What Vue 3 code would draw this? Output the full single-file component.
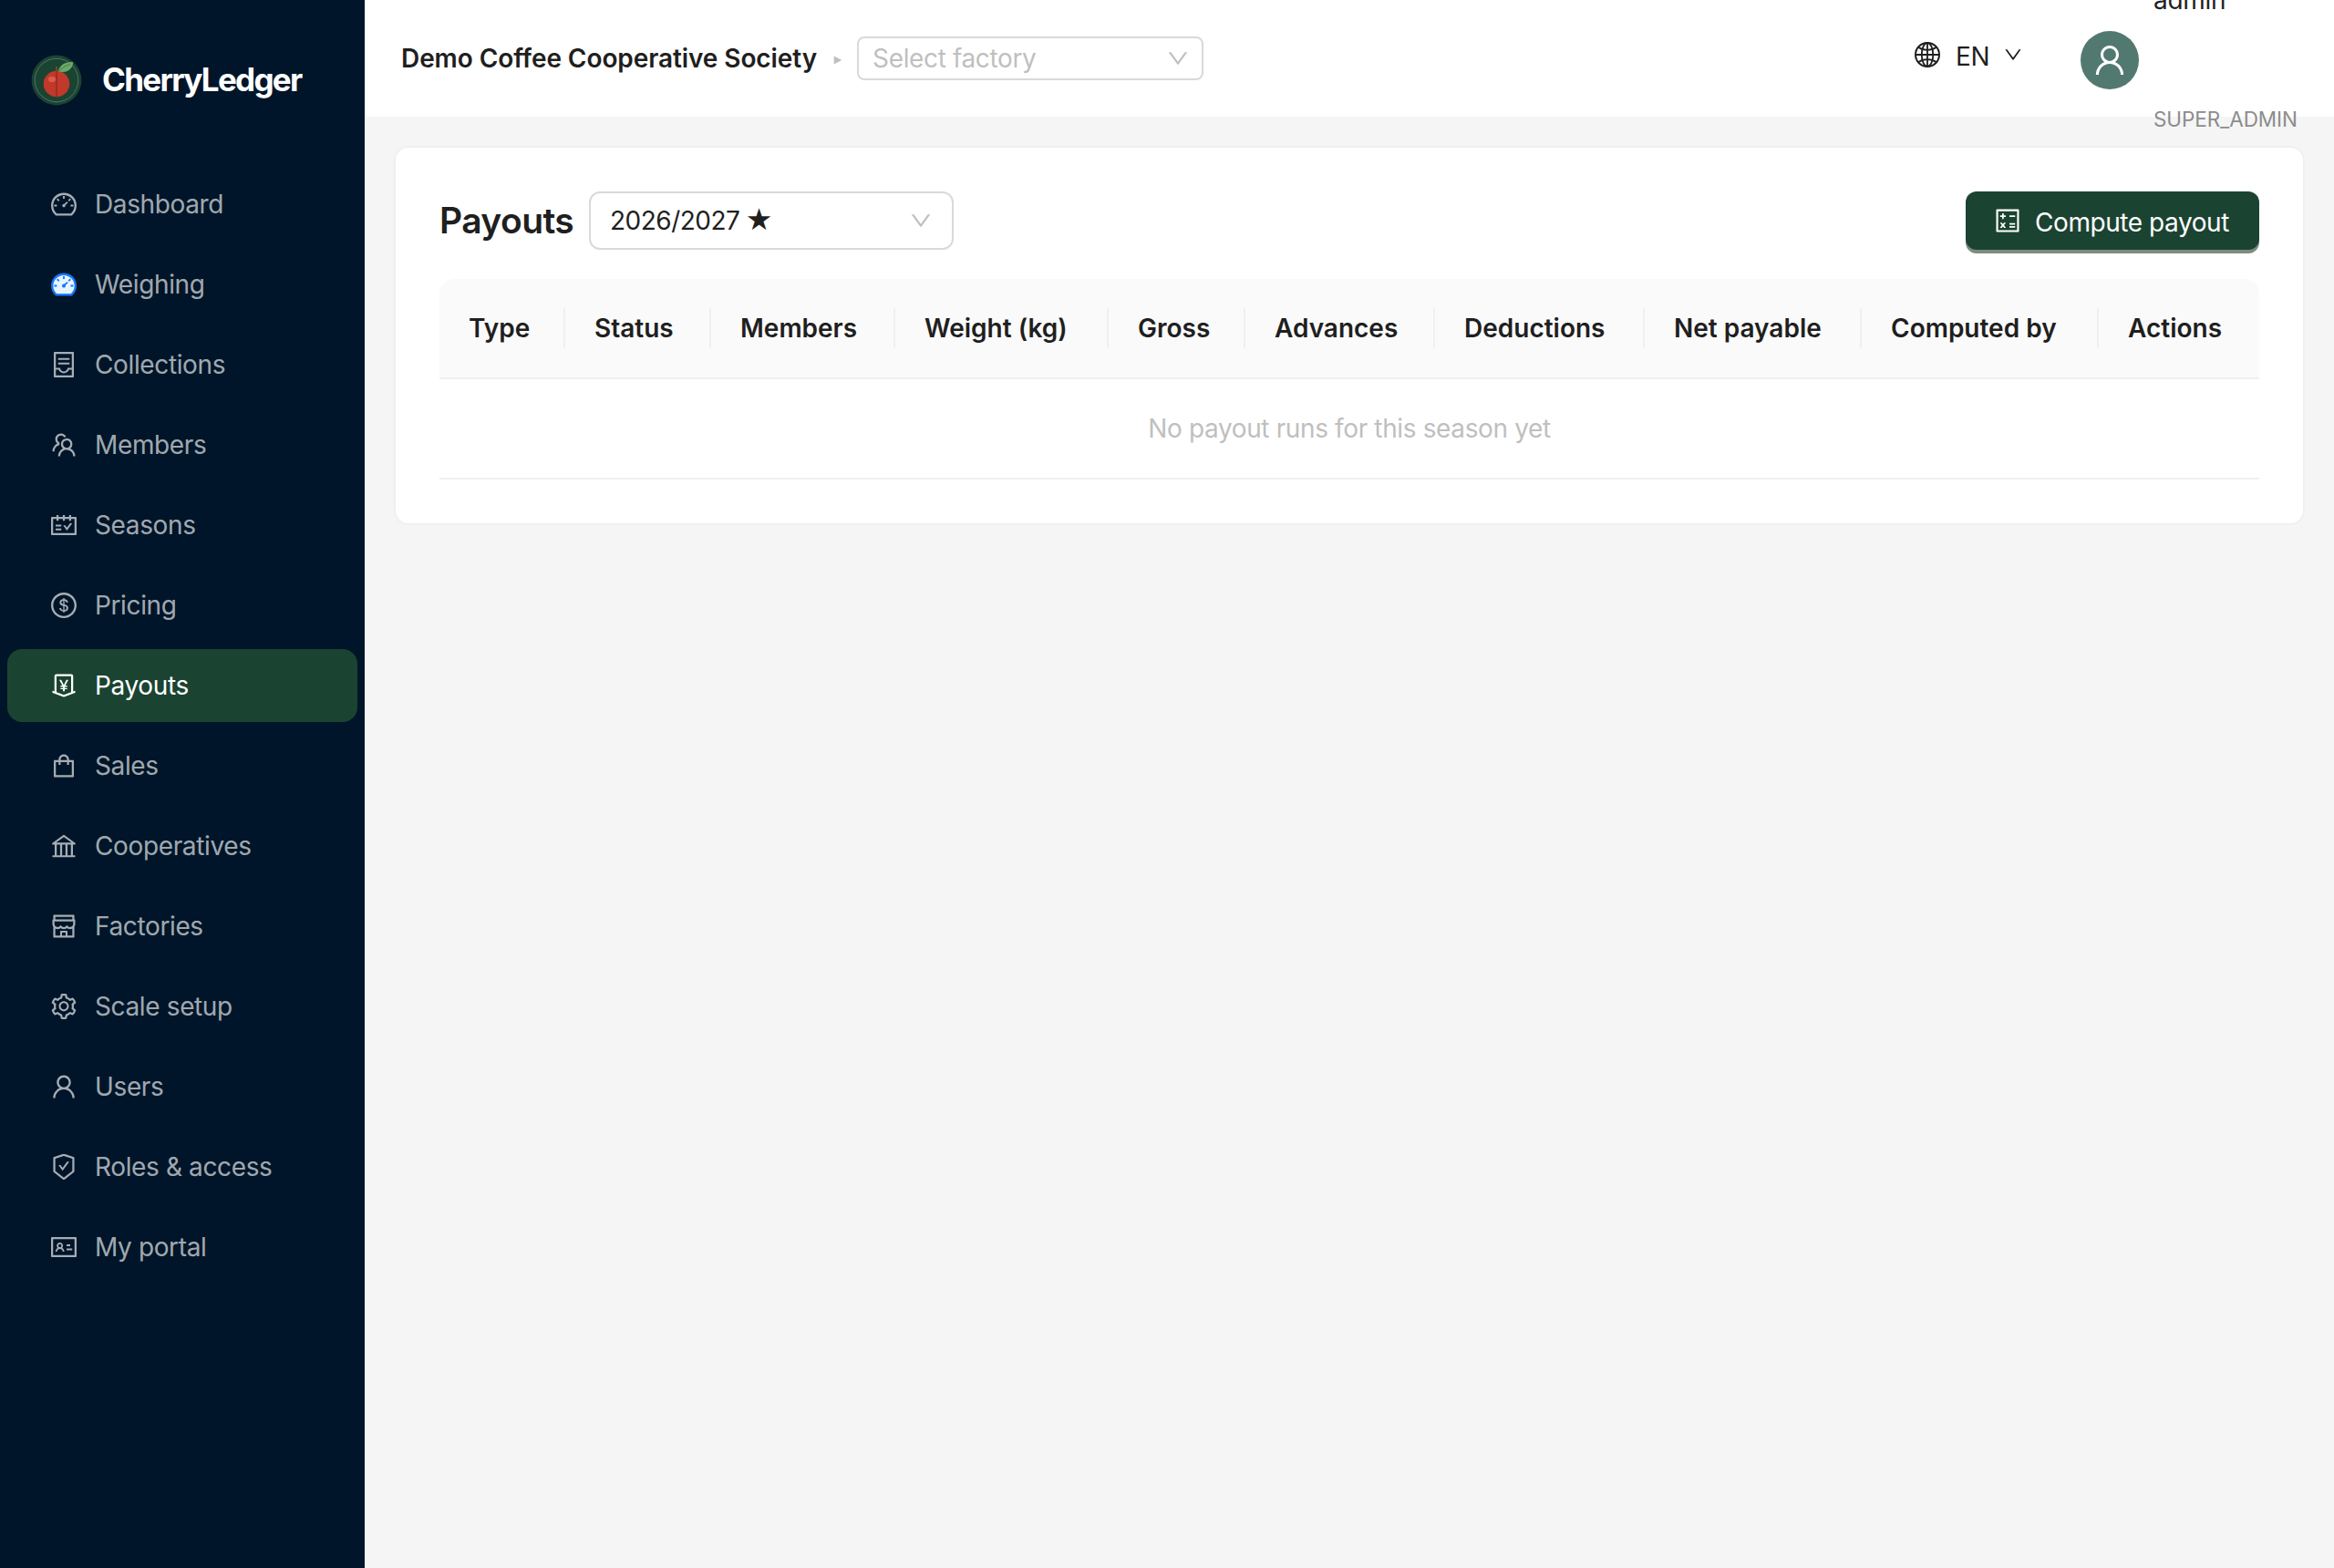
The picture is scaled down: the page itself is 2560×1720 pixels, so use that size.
<template>
  <div class="layout">
    <aside class="sider">
      <div class="brand">
        <svg class="logo" viewBox="0 0 56 56">
          <circle cx="28" cy="28" r="27.4" fill="#1b4332" />
          <circle cx="28" cy="28" r="23.8" fill="none" stroke="#52796f" stroke-width="0.9" />
          <circle cx="28" cy="32" r="14.3" fill="#c0392b" />
          <path d="M28 17.5v28.8" stroke="#962d22" stroke-width="1.6" />
          <path d="M28 13v5" stroke="#7b4a2d" stroke-width="1.8" />
          <ellipse cx="23" cy="27" rx="4.1" ry="3.1" fill="#e05a47" />
          <path d="M29.6 18.2C32 10.8 38.5 7.2 46.2 8.2 45.8 15.5 39.5 21 29.6 18.2z" fill="#6ba868" />
          <path d="M30 18q6-5.5 13-7.6" fill="none" stroke="#3c7a48" stroke-width="0.9" />
        </svg>
        <span class="brand-name">CherryLedger</span>
      </div>

      <nav class="menu">
        <a
          v-for="item in menu"
          :key="item.label"
          class="menu-item"
          :class="{ active: item.label === current }"
          @click="current = item.label"
        >
          <svg v-if="item.twotone" class="icon" viewBox="64 64 896 896">
            <path fill="#e6f4ff" d="M512 148c-227 0-412 185-412 412 0 110 52 220 140 292h544c88-72 140-182 140-292 0-227-185-412-412-412z" />
            <path fill="#1677ff" :d="item.icon" />
            <circle cx="512" cy="560" r="62" fill="#1677ff" />
          </svg>
          <svg v-else class="icon" viewBox="64 64 896 896"><path :d="item.icon" /></svg>
          <span>{{ item.label }}</span>
        </a>
      </nav>
    </aside>

    <div class="body">
      <header class="header">
        <div class="context">
          <strong class="coop">Demo Coffee Cooperative Society</strong>
          <svg class="caret" viewBox="0 0 10 10"><path d="M.7.6 9.3 5 .7 9.4z" /></svg>
          <div class="select select-factory">
            <span class="placeholder">Select factory</span>
            <svg class="arrow" viewBox="64 64 896 896"><path :d="icons.down" /></svg>
          </div>
        </div>

        <div class="account">
          <div class="lang">
            <svg class="icon globe" viewBox="64 64 896 896">
              <g fill="none" stroke="currentColor" stroke-width="58">
                <circle cx="512" cy="512" r="416" stroke-width="64" />
                <ellipse cx="512" cy="512" rx="200" ry="416" />
                <path d="M512 96v832M96 512h832" />
                <path d="M196 250c90 66 200 98 316 98s226-32 316-98M196 774c90-66 200-98 316-98s226 32 316 98" />
              </g>
            </svg>
            <span class="lang-code">EN</span>
            <svg class="lang-arrow" viewBox="64 64 896 896"><path :d="icons.down" /></svg>
          </div>
          <div class="avatar">
            <svg viewBox="64 64 896 896"><path :d="icons.user" /></svg>
          </div>
          <div class="who">
            <span class="who-name">admin</span>
            <span class="who-role">SUPER_ADMIN</span>
          </div>
        </div>
      </header>

      <main class="content">
        <section class="card">
          <div class="toolbar">
            <h1 class="title">Payouts</h1>
            <div class="select select-season">
              <span>2026/2027 <span class="star">★</span></span>
              <svg class="arrow" viewBox="64 64 896 896"><path :d="icons.down" /></svg>
            </div>
            <button class="primary">
              <svg class="icon" viewBox="64 64 896 896"><path :d="icons.calculator" /></svg>
              <span>Compute payout</span>
            </button>
          </div>

          <table class="table">
            <colgroup>
              <col v-for="col in columns" :key="col.title" :style="{ width: col.width + 'px' }">
            </colgroup>
            <thead>
              <tr>
                <th v-for="col in columns" :key="col.title">
                  <div class="th">{{ col.title }}</div>
                </th>
              </tr>
            </thead>
            <tbody>
              <tr>
                <td class="empty" :colspan="columns.length">No payout runs for this season yet</td>
              </tr>
            </tbody>
          </table>
        </section>
      </main>
    </div>
  </div>
</template>

<script setup>
import { ref } from 'vue'

const icons = {
  dashboard: 'M924.8 385.6a446.7 446.7 0 00-96-142.4 446.7 446.7 0 00-142.4-96C631.1 123.8 572.5 112 512 112s-119.1 11.8-174.4 35.2a446.7 446.7 0 00-142.4 96 446.7 446.7 0 00-96 142.4C75.8 440.9 64 499.5 64 560c0 132.7 58.3 257.7 159.9 343.1l1.7 1.4c5.8 4.8 13.1 7.5 20.6 7.5h531.7c7.5 0 14.8-2.7 20.6-7.5l1.7-1.4C901.7 817.7 960 692.7 960 560c0-60.5-11.9-119.1-35.2-174.4zM761.4 836H262.6A371.12 371.12 0 01140 560c0-99.4 38.7-192.8 109-263 70.3-70.3 163.7-109 263-109 99.4 0 192.8 38.7 263 109 70.3 70.3 109 163.7 109 263 0 105.6-44.5 205.5-122.6 276zM623.5 421.5a8.03 8.03 0 00-11.3 0L527.7 506c-18.7-5-39.4-.2-54.1 14.5a55.95 55.95 0 000 79.2 55.95 55.95 0 0079.2 0 55.87 55.87 0 0014.5-54.1l84.5-84.5c3.1-3.1 3.1-8.2 0-11.3l-28.3-28.3zM490 320h44c4.4 0 8-3.6 8-8v-80c0-4.4-3.6-8-8-8h-44c-4.4 0-8 3.6-8 8v80c0 4.4 3.6 8 8 8zm260 218v44c0 4.4 3.6 8 8 8h80c4.4 0 8-3.6 8-8v-44c0-4.4-3.6-8-8-8h-80c-4.4 0-8 3.6-8 8zm12.7-197.2l-31.1-31.1a8.03 8.03 0 00-11.3 0l-56.6 56.6a8.03 8.03 0 000 11.3l31.1 31.1c3.1 3.1 8.2 3.1 11.3 0l56.6-56.6c3.1-3.1 3.1-8.2 0-11.3zm-458.6-31.1a8.03 8.03 0 00-11.3 0l-31.1 31.1a8.03 8.03 0 000 11.3l56.6 56.6c3.1 3.1 8.2 3.1 11.3 0l31.1-31.1c3.1-3.1 3.1-8.2 0-11.3l-56.6-56.6zM262 530h-80c-4.4 0-8 3.6-8 8v44c0 4.4 3.6 8 8 8h80c4.4 0 8-3.6 8-8v-44c0-4.4-3.6-8-8-8z',
  container: 'M832 64H192c-17.7 0-32 14.3-32 32v832c0 17.7 14.3 32 32 32h640c17.7 0 32-14.3 32-32V96c0-17.7-14.3-32-32-32zm-40 824H232V687h97.9c11.6 32.8 32 62.3 59.1 84.7 34.5 28.5 78.2 44.3 123 44.3s88.5-15.7 123-44.3c27.1-22.4 47.5-51.9 59.1-84.7H792v201zm0-264H643.6l-5.2 24.7C626.4 708.5 573.2 752 512 752s-114.4-43.5-126.5-103.3l-5.2-24.7H232V136h560v488zM320 341h384c4.4 0 8-3.6 8-8v-48c0-4.4-3.6-8-8-8H320c-4.4 0-8 3.6-8 8v48c0 4.4 3.6 8 8 8zm0 160h384c4.4 0 8-3.6 8-8v-48c0-4.4-3.6-8-8-8H320c-4.4 0-8 3.6-8 8v48c0 4.4 3.6 8 8 8z',
  team: 'M824.2 699.9a301.55 301.55 0 00-86.4-60.4C783.1 602.8 812 546.8 812 484c0-110.8-92.4-201.7-203.2-200-109.1 1.7-197 90.6-197 200 0 62.8 29 118.8 74.2 155.5a300.95 300.95 0 00-86.4 60.4C345 754.6 314 826.8 312 903.8a8 8 0 008 8.2h56c4.3 0 7.9-3.4 8-7.7 1.9-58 25.4-112.3 66.7-153.5A226.62 226.62 0 01612 684c60.9 0 118.2 23.7 161.3 66.8C814.6 792 838 846.3 840 904.3c.1 4.3 3.7 7.7 8 7.7h56a8 8 0 008-8.2c-2-77-33-149.2-87.8-203.9zM612 612c-34.2 0-66.4-13.3-90.5-37.5a126.86 126.86 0 01-37.5-91.8c.3-32.8 13.4-64.5 36.3-88 24-24.6 56.1-38.3 90.4-38.7 33.9-.3 66.8 12.9 91 36.6 24.8 24.3 38.4 56.8 38.4 91.4 0 34.2-13.3 66.3-37.5 90.5A127.3 127.3 0 01612 612zM361.5 510.4c-.9-8.7-1.4-17.5-1.4-26.4 0-15.9 1.5-31.4 4.3-46.5.7-3.6-1.2-7.3-4.5-8.8-13.6-6.1-26.1-14.5-36.9-25.1a127.54 127.54 0 01-38.7-95.4c.9-32.1 13.8-62.6 36.3-85.6 24.7-25.3 57.9-39.1 93.2-38.7 31.9.3 62.7 12.6 86 34.4 7.9 7.4 14.7 15.6 20.4 24.4 2 3.1 5.9 4.4 9.3 3.2 17.6-6.1 36.2-10.4 55.3-12.4 5.6-.6 8.8-6.6 6.3-11.6-32.5-64.3-98.9-108.7-175.7-109.9-110.9-1.7-203.3 89.2-203.3 199.9 0 62.8 28.9 118.8 74.2 155.5-31.8 14.7-61.1 35-86.5 60.4-54.8 54.7-85.8 126.9-87.8 204a8 8 0 008 8.2h56.1c4.3 0 7.9-3.4 8-7.7 1.9-58 25.4-112.3 66.7-153.5 29.4-29.4 65.4-49.8 104.7-59.7 3.9-1 6.5-4.7 6-8.7z',
  schedule: 'M928 224H768v-56c0-4.4-3.6-8-8-8h-56c-4.4 0-8 3.6-8 8v56H548v-56c0-4.4-3.6-8-8-8h-56c-4.4 0-8 3.6-8 8v56H328v-56c0-4.4-3.6-8-8-8h-56c-4.4 0-8 3.6-8 8v56H96c-17.7 0-32 14.3-32 32v576c0 17.7 14.3 32 32 32h832c17.7 0 32-14.3 32-32V256c0-17.7-14.3-32-32-32zm-40 568H136V296h120v56c0 4.4 3.6 8 8 8h56c4.4 0 8-3.6 8-8v-56h148v56c0 4.4 3.6 8 8 8h56c4.4 0 8-3.6 8-8v-56h148v56c0 4.4 3.6 8 8 8h56c4.4 0 8-3.6 8-8v-56h120v496zM416 496H232c-4.4 0-8 3.6-8 8v48c0 4.4 3.6 8 8 8h184c4.4 0 8-3.6 8-8v-48c0-4.4-3.6-8-8-8zm0 136H232c-4.4 0-8 3.6-8 8v48c0 4.4 3.6 8 8 8h184c4.4 0 8-3.6 8-8v-48c0-4.4-3.6-8-8-8zm308.2-177.4L620.6 598.3l-52.8-73.1c-3-4.2-7.8-6.6-12.9-6.6H500c-6.5 0-10.3 7.4-6.5 12.7l114.1 158.2a15.9 15.9 0 0025.8 0l165-228.7c3.8-5.3 0-12.7-6.5-12.7H737c-5-.1-9.8 2.4-12.8 6.5z',
  dollar: 'M512 64C264.6 64 64 264.6 64 512s200.6 448 448 448 448-200.6 448-448S759.4 64 512 64zm0 820c-205.4 0-372-166.6-372-372s166.6-372 372-372 372 166.6 372 372-166.6 372-372 372zm47.7-395.2l-25.4-5.9V348.6c38 5.2 61.5 29 65.5 58.2.5 4 3.9 6.9 7.9 6.9h44.9c4.7 0 8.4-4.1 8-8.8-6.1-62.3-57.4-102.3-125.9-109.2V263c0-4.4-3.6-8-8-8h-28.1c-4.4 0-8 3.6-8 8v33c-70.8 6.9-126.2 46-126.2 119 0 67.6 49.8 100.2 102.1 112.7l24.7 6.3v142.7c-44.2-5.9-69-29.5-74.1-61.3-.6-3.8-4-6.6-7.9-6.6H363c-4.7 0-8.4 4-8 8.7 4.5 55 46.2 105.6 135.2 112.1V761c0 4.4 3.6 8 8 8h28.4c4.4 0 8-3.6 8-8.1l-.2-31.7c78.3-6.9 134.3-48.8 134.3-124-.1-69.4-44.2-100.4-109-116.4zm-68.6-16.2c-5.6-1.6-10.3-3.1-15-5-33.8-12.2-49.5-31.9-49.5-57.3 0-36.3 27.5-57 64.5-61.7v124zM534.3 677V543.3c3.1.9 5.9 1.6 8.8 2.2 47.3 14.4 63.2 34.4 63.2 65.1 0 39.1-29.4 62.6-72 66.4z',
  moneyCollect: 'M911.5 700.7a8 8 0 00-10.3-4.8L840 718.2V180c0-37.6-30.4-68-68-68H252c-37.6 0-68 30.4-68 68v538.2l-61.3-22.3c-.9-.3-1.8-.5-2.7-.5-4.4 0-8 3.6-8 8V763c0 3.3 2.1 6.3 5.3 7.5L501 910.1c7.1 2.6 14.8 2.6 21.9 0l383.8-139.5c3.2-1.2 5.3-4.2 5.3-7.5v-59.6c0-1-.2-1.9-.5-2.8zM512 837.5l-256-93.1V184h512v560.4l-256 93.1zM660.6 312h-54.5c-3 0-5.8 1.7-7.1 4.4l-84.7 168.8H511l-84.7-168.8a8 8 0 00-7.1-4.4h-55.7c-1.3 0-2.6.3-3.8 1-3.9 2.1-5.3 7-3.2 10.8l103.9 191.6h-57c-4.4 0-8 3.6-8 8v27.1c0 4.4 3.6 8 8 8h76v39h-76c-4.4 0-8 3.6-8 8v27.1c0 4.4 3.6 8 8 8h76V704c0 4.4 3.6 8 8 8h49.9c4.4 0 8-3.6 8-8v-63.5h76.3c4.4 0 8-3.6 8-8v-27.1c0-4.4-3.6-8-8-8h-76.3v-39h76.3c4.4 0 8-3.6 8-8v-27.1c0-4.4-3.6-8-8-8H564l103.7-191.6c.6-1.2 1-2.5 1-3.8-.1-4.3-3.7-7.9-8.1-7.9z',
  shopping: 'M832 312H696v-16c0-101.6-82.4-184-184-184s-184 82.4-184 184v16H192c-17.7 0-32 14.3-32 32v536c0 17.7 14.3 32 32 32h640c17.7 0 32-14.3 32-32V344c0-17.7-14.3-32-32-32zm-432-16c0-61.9 50.1-112 112-112s112 50.1 112 112v16H400v-16zm392 544H232V384h96v88c0 4.4 3.6 8 8 8h56c4.4 0 8-3.6 8-8v-88h224v88c0 4.4 3.6 8 8 8h56c4.4 0 8-3.6 8-8v-88h96v456z',
  bank: 'M894 462c30.9 0 43.8-39.7 18.7-58L530.8 126.2a31.81 31.81 0 00-37.6 0L111.3 404c-25.1 18.2-12.2 58 18.8 58H192v374h-72c-4.4 0-8 3.6-8 8v52c0 4.4 3.6 8 8 8h784c4.4 0 8-3.6 8-8v-52c0-4.4-3.6-8-8-8h-72V462h62zM512 196.7l271.1 197.2H240.9L512 196.7zM264 462h117v374H264V462zm189 0h117v374H453V462zm307 374H642V462h118v374z',
  shop: 'M882 272.1V144c0-17.7-14.3-32-32-32H174c-17.7 0-32 14.3-32 32v128.1c-16.7 1-30 14.9-30 31.9v131.7a177 177 0 0014.4 70.4c4.3 10.2 9.6 19.8 15.6 28.9v345c0 17.6 14.3 32 32 32h676c17.7 0 32-14.3 32-32V535a175 175 0 0015.6-28.9c9.5-22.3 14.4-46 14.4-70.4V304c0-17-13.3-30.9-30-31.9zM214 184h596v88H214v-88zm362 656.1H448V736h128v104.1zm234 0H640V704c0-17.7-14.3-32-32-32H416c-17.7 0-32 14.3-32 32v136.1H214V597.9c2.9 1.4 5.9 2.8 9 4 22.3 9.4 46 14.1 70.4 14.1s48-4.7 70.4-14.1c13.8-5.8 26.8-13.2 38.7-22.1.2-.1.4-.1.6 0a180.4 180.4 0 0038.7 22.1c22.3 9.4 46 14.1 70.4 14.1 24.4 0 48-4.7 70.4-14.1 13.8-5.8 26.8-13.2 38.7-22.1.2-.1.4-.1.6 0a180.4 180.4 0 0038.7 22.1c22.3 9.4 46 14.1 70.4 14.1 24.4 0 48-4.7 70.4-14.1 3-1.3 6-2.6 9-4v242.2zm30-404.4c0 59.8-49 108.3-109.3 108.3-40.8 0-76.4-22.1-95.2-54.9-2.9-5-8.1-8.1-13.9-8.1h-.6c-5.7 0-11 3.1-13.9 8.1A109.24 109.24 0 01512 544c-40.7 0-76.2-22-95-54.7-3-5.1-8.4-8.3-14.3-8.3s-11.4 3.2-14.3 8.3a109.63 109.63 0 01-95.1 54.7C233 544 184 495.5 184 435.7v-91.2c0-.3.2-.5.5-.5h655c.3 0 .5.2.5.5v91.2z',
  setting: 'M924.8 625.7l-65.5-56c3.1-19 4.7-38.4 4.7-57.8s-1.6-38.8-4.7-57.8l65.5-56a32.03 32.03 0 009.3-35.2l-.9-2.6a443.74 443.74 0 00-79.7-137.9l-1.8-2.1a32.12 32.12 0 00-35.1-9.5l-81.3 28.9c-30-24.6-63.5-44-99.7-57.6l-15.7-85a32.05 32.05 0 00-25.8-25.7l-2.7-.5c-52.1-9.4-106.9-9.4-159 0l-2.7.5a32.05 32.05 0 00-25.8 25.7l-15.8 85.4a351.86 351.86 0 00-99 57.4l-81.9-29.1a32 32 0 00-35.1 9.5l-1.8 2.1a446.02 446.02 0 00-79.7 137.9l-.9 2.6c-4.5 12.5-.8 26.5 9.3 35.2l66.3 56.6c-3.1 18.8-4.6 38-4.6 57.1 0 19.2 1.5 38.4 4.6 57.1L99 625.5a32.03 32.03 0 00-9.3 35.2l.9 2.6c18.1 50.4 44.9 96.9 79.7 137.9l1.8 2.1a32.12 32.12 0 0035.1 9.5l81.9-29.1c29.8 24.5 63.1 43.9 99 57.4l15.8 85.4a32.05 32.05 0 0025.8 25.7l2.7.5a449.4 449.4 0 00159 0l2.7-.5a32.05 32.05 0 0025.8-25.7l15.7-85a350 350 0 0099.7-57.6l81.3 28.9a32 32 0 0035.1-9.5l1.8-2.1c34.8-41.1 61.6-87.5 79.7-137.9l.9-2.6c4.5-12.3.8-26.3-9.3-35zM788.3 465.9c2.5 15.1 3.8 30.6 3.8 46.1s-1.3 31-3.8 46.1l-6.6 40.1 74.7 63.9a370.03 370.03 0 01-42.6 73.6L721 702.8l-31.4 25.8c-23.9 19.6-50.5 35-79.3 45.8l-38.1 14.3-17.9 97a377.5 377.5 0 01-85 0l-17.9-97.2-37.8-14.5c-28.5-10.8-55-26.2-78.7-45.7l-31.4-25.9-93.4 33.2c-17-22.9-31.2-47.6-42.6-73.6l75.5-64.5-6.5-40c-2.4-14.9-3.7-30.3-3.7-45.5 0-15.3 1.2-30.6 3.7-45.5l6.5-40-75.5-64.5c11.3-26.1 25.6-50.7 42.6-73.6l93.4 33.2 31.4-25.9c23.7-19.5 50.2-34.9 78.7-45.7l37.9-14.3 17.9-97.2c28.1-3.2 56.8-3.2 85 0l17.9 97 38.1 14.3c28.7 10.8 55.4 26.2 79.3 45.8l31.4 25.8 92.8-32.9c17 22.9 31.2 47.6 42.6 73.6L781.8 426l6.5 39.9zM512 326c-97.2 0-176 78.8-176 176s78.8 176 176 176 176-78.8 176-176-78.8-176-176-176zm79.2 255.2A111.6 111.6 0 01512 614c-29.9 0-58-11.7-79.2-32.8A111.6 111.6 0 01400 502c0-29.9 11.7-58 32.8-79.2C454 401.6 482.1 390 512 390c29.9 0 58 11.6 79.2 32.8A111.6 111.6 0 01624 502c0 29.9-11.7 58-32.8 79.2z',
  user: 'M858.5 763.6a374 374 0 00-80.6-119.5 375.63 375.63 0 00-119.5-80.6c-.4-.2-.8-.3-1.2-.5C719.5 518 760 444.7 760 362c0-137-111-248-248-248S264 225 264 362c0 82.7 40.5 156 102.8 201.1-.4.2-.8.3-1.2.5-44.8 18.9-85 46-119.5 80.6a375.63 375.63 0 00-80.6 119.5A371.7 371.7 0 00136 901.8a8 8 0 008 8.2h60c4.4 0 7.9-3.5 8-7.8 2-77.2 33-149.5 87.8-204.3 56.7-56.7 132-87.9 212.2-87.9s155.5 31.2 212.2 87.9C779 752.7 810 825 812 902.2c.1 4.4 3.6 7.8 8 7.8h60a8 8 0 008-8.2c-1-47.8-10.9-94.3-29.5-138.2zM512 534c-45.9 0-89.1-17.9-121.6-50.4S340 407.9 340 362c0-45.9 17.9-89.1 50.4-121.6S466.1 190 512 190s89.1 17.9 121.6 50.4S684 316.1 684 362c0 45.9-17.9 89.1-50.4 121.6S557.9 534 512 534z',
  safety: 'M866.9 169.9L527.1 54.1C523 52.7 517.5 52 512 52s-11 .7-15.1 2.1L157.1 169.9c-8.3 2.8-15.1 12.4-15.1 21.2v482.4c0 8.8 5.7 20.4 12.6 25.9L499.3 968c3.5 2.7 8 4.1 12.6 4.1s9.2-1.4 12.6-4.1l344.7-268.6c6.9-5.4 12.6-17 12.6-25.9V191.1c.2-8.8-6.6-18.3-14.9-21.2zM810 654.3L512 886.5 214 654.3V226.7l298-101.6 298 101.6v427.6zm-405.8-201c-3-4.1-7.8-6.6-13-6.6H336c-6.5 0-10.3 7.4-6.5 12.7l126.4 174a16.1 16.1 0 0026 0l212.6-292.7c3.8-5.3 0-12.7-6.5-12.7h-55.2c-5.1 0-10 2.5-13 6.6L468.9 542.4l-64.7-89.1z',
  idcard: 'M928 160H96c-17.7 0-32 14.3-32 32v640c0 17.7 14.3 32 32 32h832c17.7 0 32-14.3 32-32V192c0-17.7-14.3-32-32-32zm-40 632H136V232h752v560zM610.3 476h123.4c1.3 0 2.3-3.6 2.3-8v-48c0-4.4-1-8-2.3-8H610.3c-1.3 0-2.3 3.6-2.3 8v48c0 4.4 1 8 2.3 8zm4.8 144h185.7c3.9 0 7.1-3.6 7.1-8v-48c0-4.4-3.2-8-7.1-8H615.1c-3.9 0-7.1 3.6-7.1 8v48c0 4.4 3.2 8 7.1 8zM224 673h43.9c4.2 0 7.6-3.3 7.9-7.5 3.8-50.5 46-90.5 97.2-90.5s93.4 40 97.2 90.5c.3 4.2 3.7 7.5 7.9 7.5H522a8 8 0 008-8.4c-2.8-53.3-32-99.7-74.6-126.1a111.8 111.8 0 0029.1-75.5c0-61.9-49.9-112-111.4-112s-111.4 50.1-111.4 112c0 29.1 11 55.5 29.1 75.5a158.09 158.09 0 00-74.6 126.1c-.4 4.6 3.2 8.4 7.8 8.4zm149-262c28.5 0 51.7 23.3 51.7 52s-23.2 52-51.7 52-51.7-23.3-51.7-52 23.2-52 51.7-52z',
  calculator: 'M251.2 387H320v68.8c0 1.8 1.8 3.2 4 3.2h48c2.2 0 4-1.4 4-3.3V387h68.8c1.8 0 3.2-1.8 3.2-4v-48c0-2.2-1.4-4-3.3-4H376v-68.8c0-1.8-1.8-3.2-4-3.2h-48c-2.2 0-4 1.4-4 3.2V331h-68.8c-1.8 0-3.2 1.8-3.2 4v48c0 2.2 1.4 4 3.2 4zm328 0h193.6c1.8 0 3.2-1.8 3.2-4v-48c0-2.2-1.4-4-3.3-4H579.2c-1.8 0-3.2 1.8-3.2 4v48c0 2.2 1.4 4 3.2 4zm0 265h193.6c1.8 0 3.2-1.8 3.2-4v-48c0-2.2-1.4-4-3.3-4H579.2c-1.8 0-3.2 1.8-3.2 4v48c0 2.2 1.4 4 3.2 4zm0 104h193.6c1.8 0 3.2-1.8 3.2-4v-48c0-2.2-1.4-4-3.3-4H579.2c-1.8 0-3.2 1.8-3.2 4v48c0 2.2 1.4 4 3.2 4zm-195.7-81l61.2-74.9c4.3-5.2.7-13.1-5.9-13.1H388c-2.3 0-4.5 1-5.9 2.9l-34 41.6-34-41.6a7.85 7.85 0 00-5.9-2.9h-50.9c-6.6 0-10.2 7.9-5.9 13.1l61.2 74.9-62.7 76.8c-4.4 5.2-.8 13.1 5.8 13.1h50.8c2.3 0 4.5-1 5.9-2.9l35.5-43.5 35.5 43.5c1.5 1.8 3.7 2.9 5.9 2.9h50.8c6.6 0 10.2-7.9 5.9-13.1L383.5 675zM880 112H144c-17.7 0-32 14.3-32 32v736c0 17.7 14.3 32 32 32h736c17.7 0 32-14.3 32-32V144c0-17.7-14.3-32-32-32zm-36 732H180V180h664v664z',
  down: 'M884 256h-75c-5.1 0-9.9 2.5-12.9 6.6L512 654.2 227.9 262.6c-3-4.1-7.8-6.6-12.9-6.6h-75c-6.5 0-10.3 7.4-6.5 12.7l352.6 486.1c12.8 17.6 39 17.6 51.7 0l352.6-486.1c3.9-5.3.1-12.7-6.4-12.7z'
}

const menu = [
  { label: 'Dashboard', icon: icons.dashboard },
  { label: 'Weighing', icon: icons.dashboard, twotone: true },
  { label: 'Collections', icon: icons.container },
  { label: 'Members', icon: icons.team },
  { label: 'Seasons', icon: icons.schedule },
  { label: 'Pricing', icon: icons.dollar },
  { label: 'Payouts', icon: icons.moneyCollect },
  { label: 'Sales', icon: icons.shopping },
  { label: 'Cooperatives', icon: icons.bank },
  { label: 'Factories', icon: icons.shop },
  { label: 'Scale setup', icon: icons.setting },
  { label: 'Users', icon: icons.user },
  { label: 'Roles & access', icon: icons.safety },
  { label: 'My portal', icon: icons.idcard }
]

const current = ref('Payouts')

const columns = [
  { title: 'Type', width: 138 },
  { title: 'Status', width: 160 },
  { title: 'Members', width: 202 },
  { title: 'Weight (kg)', width: 234 },
  { title: 'Gross', width: 150 },
  { title: 'Advances', width: 208 },
  { title: 'Deductions', width: 230 },
  { title: 'Net payable', width: 238 },
  { title: 'Computed by', width: 260 },
  { title: 'Actions', width: 176 }
]
</script>

<style>
body {
  background: #f5f5f5;
}
</style>

<style scoped>
.layout {
  display: flex;
  height: 1720px;
  background: #f5f5f5;
  color: #1f1f1f;
  font-family: Inter, "Liberation Sans", sans-serif;
  font-size: 28px;
  letter-spacing: -0.37px;
  line-height: 44px;
}

.layout svg {
  display: block;
  flex-shrink: 0;
  fill: currentColor;
}

.icon {
  width: 28px;
  height: 28px;
}

.sider {
  width: 400px;
  flex-shrink: 0;
  background: #001529;
}

.brand {
  display: flex;
  align-items: center;
  gap: 22px;
  height: 176px;
  padding-left: 34px;
}

.logo {
  width: 56px;
  height: 56px;
}

.brand-name {
  padding-bottom: 2px;
  color: #fff;
  font-size: 35px;
  font-weight: 700;
  letter-spacing: -1.7px;
}

.menu {
  display: flex;
  flex-direction: column;
  gap: 8px;
  padding: 8px;
}

.menu-item {
  display: flex;
  align-items: center;
  gap: 20px;
  height: 80px;
  padding-left: 48px;
  box-sizing: border-box;
  border-radius: 16px;
  color: rgba(255, 255, 255, 0.65);
  cursor: pointer;
}

.menu-item.active {
  background: #1b4332;
  color: #fff;
}

.body {
  flex: 1;
  min-width: 0;
}

.header {
  display: flex;
  align-items: center;
  justify-content: space-between;
  height: 128px;
  padding: 0 40px;
  background: #fff;
}

.context {
  display: flex;
  align-items: center;
}

.coop {
  font-weight: 600;
  letter-spacing: -0.085px;
}

.caret {
  width: 10px;
  height: 10px;
  margin: 4px 16px 0 18px;
  color: #bfbfbf;
}

.select {
  display: flex;
  align-items: center;
  justify-content: space-between;
  box-sizing: border-box;
  border: 2px solid #d9d9d9;
  background: #fff;
}

.select-factory {
  width: 380px;
  height: 48px;
  padding: 0 14px 0 15px;
  border-radius: 8px;
}

.placeholder {
  color: #bfbfbf;
}

.arrow {
  width: 24px;
  height: 24px;
  color: #bfbfbf;
}

.account {
  display: flex;
  align-items: center;
  height: 128px;
}

.lang {
  display: flex;
  align-items: center;
  padding-bottom: 8px;
}

.lang-code {
  width: 37px;
  margin: 4px 16px 0 17px;
}

.lang-arrow {
  width: 20px;
  height: 20px;
}

.avatar {
  display: flex;
  align-items: center;
  justify-content: center;
  width: 64px;
  height: 64px;
  margin: 4px 16px 0 64px;
  border-radius: 50%;
  background: #52796f;
  color: #fff;
}

.avatar svg {
  width: 36px;
  height: 36px;
}

.who {
  display: flex;
  flex-direction: column;
  width: 158px;
  line-height: 128px;
}

.who-name {
  letter-spacing: -0.3px;
}

.who-role {
  margin-bottom: -6px;
  color: #8c8c8c;
  font-size: 22.5px;
  line-height: 134px;
  letter-spacing: -0.1px;
}

.content {
  padding: 32px;
}

.card {
  padding: 48px;
  border: 2px solid #f0f0f0;
  border-radius: 16px;
  background: #fff;
}

.toolbar {
  display: flex;
  align-items: center;
  height: 64px;
  margin-bottom: 32px;
}

.title {
  width: 148px;
  margin: 0 16px 0 0;
  font-size: 39px;
  font-weight: 600;
  letter-spacing: -0.6px;
}

.select-season {
  width: 400px;
  height: 64px;
  padding: 0 22px 0 21px;
  border-radius: 12px;
  letter-spacing: -0.5px;
}

.star {
  margin-left: -1px;
  font-family: "DejaVu Sans", sans-serif;
  font-size: 33px;
  line-height: 1;
}

.primary {
  display: flex;
  align-items: center;
  gap: 16px;
  width: 322px;
  height: 64px;
  margin-left: auto;
  padding: 0 32px;
  border: none;
  border-radius: 12px;
  background: #1b4332;
  box-shadow: 0 4px 0 #7f8a81;
  color: #fff;
  font: inherit;
  letter-spacing: -0.43px;
  white-space: nowrap;
  cursor: pointer;
}

.primary span {
  padding-top: 4px;
}

.table {
  width: 1996px;
  table-layout: fixed;
  border-collapse: separate;
  border-spacing: 0;
}

.table th {
  height: 108px;
  padding: 0;
  border-bottom: 2px solid #f0f0f0;
  background: #fafafa;
  font-weight: 600;
  letter-spacing: 0;
  text-align: left;
}

.table th:first-child {
  border-top-left-radius: 16px;
}

.table th:last-child {
  border-top-right-radius: 16px;
}

.th {
  padding-left: 32px;
  border-right: 2px solid #f0f0f0;
}

.table th:last-child .th {
  border-right: none;
}

.empty {
  height: 108px;
  padding: 0;
  border-bottom: 2px solid #f0f0f0;
  color: #bfbfbf;
  text-align: center;
}
</style>
